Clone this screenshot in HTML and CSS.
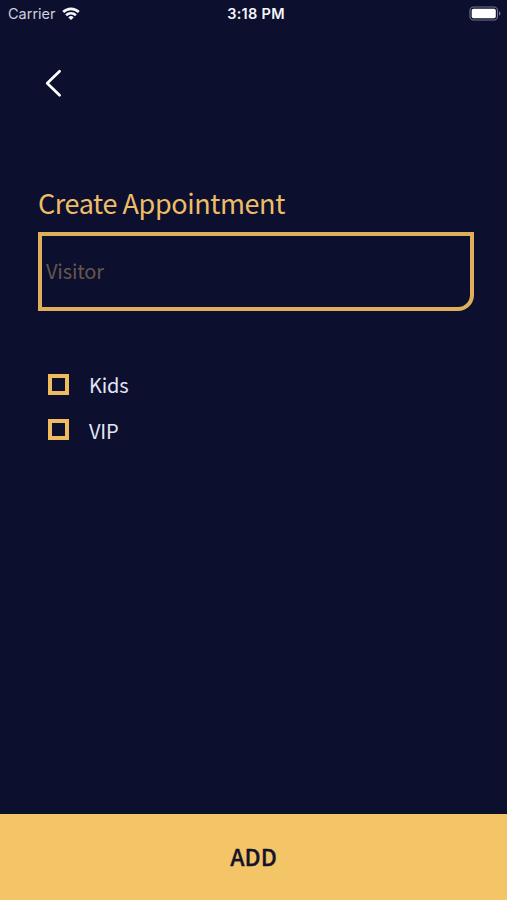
FILE: index.html
```html
<!DOCTYPE html>
<html lang="en">
<head>
<meta charset="utf-8">
<title>Create Appointment</title>
<link rel="stylesheet" href="styles.css">
</head>
<body>
<div class="screen">
  <header class="status">
    <div class="carrier"><span class="carrier-name">Carrier</span>
      <svg class="wifi" width="18" height="13" viewBox="0 0 18 13" fill="none" stroke="#f4f5fb" stroke-width="2.6"><path d="M1.2 5a11.2 11.2 0 0 1 15.6 0"/><path d="M4.1 8.2a7.1 7.1 0 0 1 9.8 0"/><path d="M9 12.9 6.3 10.4a3.9 3.9 0 0 1 5.4 0z" fill="#f4f5fb" stroke="none"/></svg>
    </div>
    <span class="time">3:18 PM</span>
    <svg class="battery" width="32" height="15" viewBox="0 0 32 15"><rect x="1" y="1" width="27.5" height="13" rx="3.6" fill="none" stroke="#74768c" stroke-width="1.1"/><rect x="2.7" y="2.7" width="24.1" height="9.6" rx="1.8" fill="#fff"/><path d="M30 5.3c2 .8 2 3.6 0 4.4z" fill="#74768c"/></svg>
  </header>
  <nav class="nav">
    <svg class="back" width="20" height="30" viewBox="0 0 20 30" fill="none" stroke="#fff" stroke-width="2.7" stroke-linecap="round" stroke-linejoin="round"><path d="M15.6 3.2 3.2 15.2 15.6 27.2"/></svg>
  </nav>
  <main class="form">
    <h1 class="title">Create Appointment</h1>
    <div class="field"><span class="placeholder">Visitor</span></div>
    <div class="options">
      <div class="option"><span class="box"></span><span class="label">Kids</span></div>
      <div class="option"><span class="box"></span><span class="label label-low">VIP</span></div>
    </div>
  </main>
  <div class="add"><span class="add-text">ADD</span></div>
</div>
</body>
</html>
```
FILE: styles.css
```css
* { box-sizing: border-box; }
body { margin: 0; background: #0c0f2e; }
.screen {
  display: flex;
  flex-direction: column;
  height: 900px;
  background: #0c0f2e;
  font-family: "Noto Sans CJK SC", "Noto Sans", sans-serif;
}
.status {
  display: grid;
  grid-template-columns: 1fr auto 1fr;
  align-items: center;
  height: 26px;
  padding: 0 6px 0 8px;
  font-family: Inter, sans-serif;
  color: #f4f5fb;
}
.carrier { display: flex; align-items: center; gap: 6px; }
.carrier-name { font-size: 14.5px; color: #cfd0dd; }
.time { padding-left: 3px; font-size: 14.5px; font-weight: 600; letter-spacing: 0.3px; }
.battery { justify-self: end; }
.nav { height: 157px; padding: 42px 0 0 44px; }
.back { display: block; }
.form { flex: 1; padding: 0 33px 0 38px; }
.title {
  margin: 0;
  height: 49px;
  font-size: 27px;
  font-weight: 400;
  line-height: 40px;
  letter-spacing: -0.42px;
  color: #edbd67;
}
.field {
  display: flex;
  align-items: center;
  height: 79px;
  padding: 0 0 2px 4px;
  border: 4px solid #dfaf5c;
  border-radius: 0 0 16px 0;
}
.placeholder { font-size: 20px; letter-spacing: -0.15px; color: #67564d; }
.options { padding: 51px 0 0 10px; }
.option { display: flex; align-items: center; height: 45px; gap: 20px; }
.box { width: 21px; height: 21px; border: 4px solid #eebb5e; }
.label { font-size: 20px; letter-spacing: -0.2px; color: #e3e5f5; }
.label-low { padding-top: 2px; }
.add {
  display: flex;
  align-items: center;
  justify-content: center;
  height: 86px;
  padding-bottom: 2px;
  background: #f4c566;
  color: #14132c;
}
.add-text { font-size: 23px; font-weight: 500; -webkit-text-stroke: 0.3px #14132c; }
```
